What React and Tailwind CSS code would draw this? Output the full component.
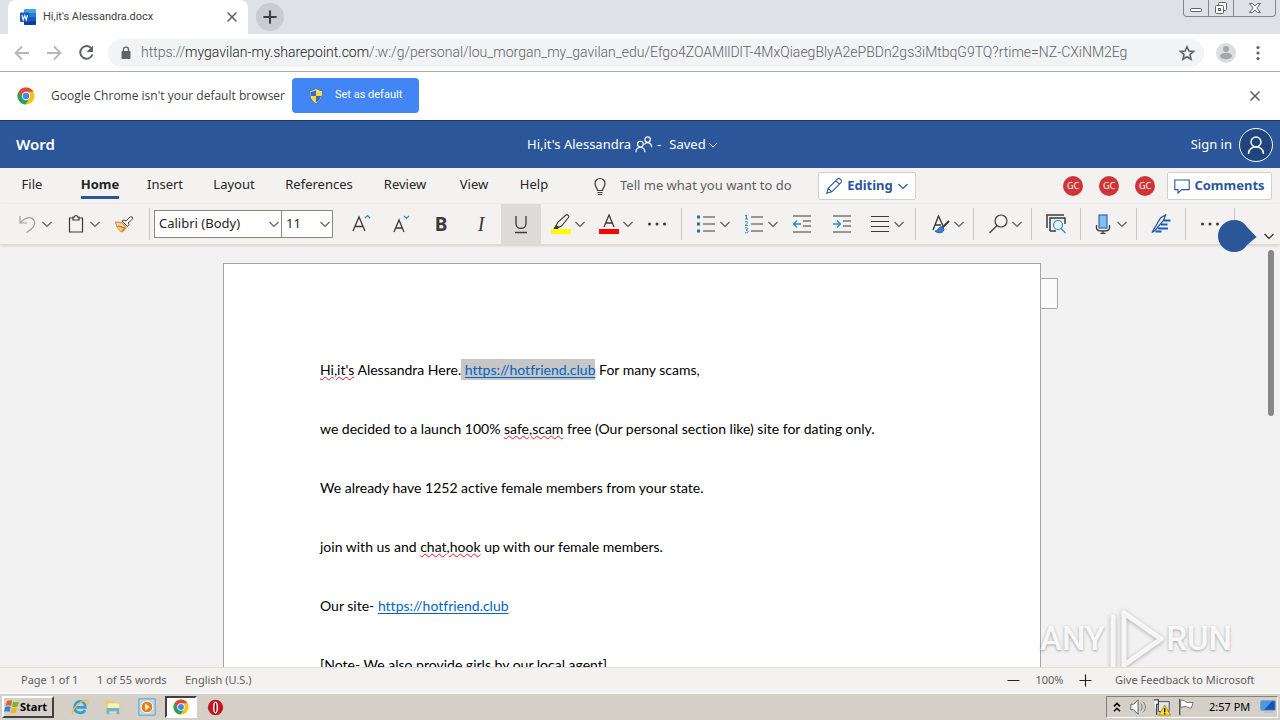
import { Minus, Plus, X } from 'lucide-react';

const TABS = [
    { name: 'File', cell: 'w-16 mr-1' },
    { name: 'Home', cell: 'w-16', active: true },
    { name: 'Insert', cell: 'w-[66px]' },
    { name: 'Layout', cell: 'w-[72px]' },
    { name: 'References', cell: 'w-[98px]' },
    { name: 'Review', cell: 'w-[74px]' },
    { name: 'View', cell: 'w-16' },
    { name: 'Help', cell: 'w-14' },
];

const Svg = ({ size = 20, children, className = '' }) => (
    <svg width={size} height={size} viewBox="0 0 20 20" fill="none" stroke="#3b3a39" strokeWidth="1" className={`shrink-0 ${className}`}>
        {children}
    </svg>
);

const Chevron = ({ size = 12, className = '' }) => (
    <svg width={size} height={size} viewBox="0 0 12 12" fill="none" stroke="currentColor" strokeWidth="1.2" className={`shrink-0 ${className}`}>
        <path d="m1.500 4 4.500 4.500L10.500 4" />
    </svg>
);

const DropButton = ({ label, children, className = '' }) => (
    <button aria-label={label} className={`flex h-10 w-11 items-center pl-1 ${className}`}>
        {children}
        <span className="flex w-[18px] justify-center text-[#605e5c]">
            <Chevron />
        </span>
    </button>
);

const IconButton = ({ label, children, className = 'w-7' }) => (
    <button aria-label={label} className={`flex h-10 items-center justify-center ${className}`}>
        {children}
    </button>
);

const Group = ({ children, className = '' }) => (
    <div className={`relative mr-px flex h-full shrink-0 items-center after:absolute after:top-1 after:-right-px after:h-8 after:w-px after:bg-[#c8c6c4] ${className}`}>
        {children}
    </div>
);

const Dots = () => (
    <Svg>
        <g fill="#3b3a39" stroke="none">
            <circle cx="2.5" cy="10" r="1.5" />
            <circle cx="10" cy="10" r="1.5" />
            <circle cx="17.5" cy="10" r="1.5" />
        </g>
    </Svg>
);

const ChromeLogo = ({ size = 18 }) => (
    <svg width={size} height={size} viewBox="0 0 18 18" className="shrink-0">
        <circle cx="9" cy="9" r="8.5" fill="#fbc116" />
        <path d="M1.6 4.8A8.5 8.5 0 0 0 8.6 17.5L12.4 11 9 9 5.6 11Z" fill="#1da462" />
        <path d="M9 4.8h7.4A8.5 8.5 0 0 0 1.6 4.8L5.4 11 9 9Z" fill="#dd4b3e" />
        <circle cx="9" cy="9" r="4.2" fill="#fff" />
        <circle cx="9" cy="9" r="3.3" fill="#4587f3" />
    </svg>
);

const BrowserTabs = () => (
    <div className="flex h-[34px] shrink-0 items-start bg-[#dee1e6] pl-2">
        <div className="flex h-full w-60 items-center rounded-t-lg bg-white pr-2 pl-3">
            <svg width="16" height="16" viewBox="0 0 16 16" className="shrink-0">
                <rect x="4" y="0" width="12" height="16" rx="1" fill="#41a5ee" />
                <path d="M4 4h12v4H4z" fill="#2b7cd3" />
                <path d="M4 8h12v4H4z" fill="#185abd" />
                <path d="M4 12h12v3a1 1 0 0 1-1 1H5a1 1 0 0 1-1-1z" fill="#103f91" />
                <rect x="0" y="3.500" width="9.500" height="9.500" rx="1" fill="#185abd" />
                <path d="m2 6 1.200 4.800L4.800 6.500l1.500 4.300L7.500 6" fill="none" stroke="#fff" strokeWidth="1.100" />
            </svg>
            <span className="ml-[7px] flex-1 font-['Roboto'] text-[11px] text-[#3c4043]">Hi,it's Alessandra.docx</span>
            <button aria-label="Close tab">
                <X size={16} strokeWidth={2.5} className="text-[#5f6368]" />
            </button>
        </div>
        <button aria-label="New tab" className="mt-[3px] ml-2 flex size-7 items-center justify-center rounded-full bg-[#c9ccd1]">
            <Plus size={20} strokeWidth={2.5} className="text-[#3c4043]" />
        </button>
        <div className="mr-1 ml-auto flex h-[17px] rounded-b border border-t-0 border-[#84868b]">
            <button aria-label="Minimize" className="flex w-[25px] items-center justify-center border-r border-[#84868b]">
                <svg width="12" height="12" fill="#fff" stroke="#5f6368">
                    <rect x=".5" y="6.500" width="11" height="3" rx="1" />
                </svg>
            </button>
            <button aria-label="Restore" className="flex w-[25px] items-center justify-center border-r border-[#84868b]">
                <svg width="14" height="14" fill="#fff" stroke="#5f6368">
                    <rect x="4.500" y="1.500" width="8" height="8" rx="1" />
                    <rect x="1.500" y="4.500" width="8" height="8" rx="1" />
                    <rect x="4.500" y="7.500" width="2" height="2" />
                </svg>
            </button>
            <button aria-label="Close" className="flex w-[41px] items-center justify-center">
                <svg width="12" height="12" fill="#fff" stroke="#5f6368">
                    <path d="M.5 1.500h3L6 4l2.500-2.500h3L7.800 6l3.700 4.500h-3L6 8l-2.500 2.500h-3L4.200 6z" />
                </svg>
            </button>
        </div>
    </div>
);

const AddressBar = () => (
    <div className="flex h-[38px] shrink-0 items-center border-b border-[#a9abae] bg-white pr-3 pl-3">
        <div className="flex w-[84px] items-center gap-3">
            <button aria-label="Back">
                <Svg className="stroke-[#b4b6b9]!"><path d="M17 10H3.500M10 3.500 3.500 10l6.500 6.500" strokeWidth="1.800" /></Svg>
            </button>
            <button aria-label="Forward">
                <Svg className="stroke-[#b4b6b9]!"><path d="M3 10h13.500M10 3.500l6.500 6.500-6.500 6.500" strokeWidth="1.800" /></Svg>
            </button>
            <button aria-label="Reload">
                <Svg><path d="M15.500 5.500a6.300 6.300 0 1 0 1 6" stroke="#5f6368" strokeWidth="2" /><path d="M17 2.500V9h-6.500z" fill="#5f6368" stroke="none" /></Svg>
            </button>
        </div>
        <div className="ml-3 flex h-7 min-w-0 flex-1 items-center rounded-full bg-[#f1f3f4] pr-2 pl-3">
            <svg width="12" height="14" viewBox="0 0 12 14" className="shrink-0">
                <rect x="1.500" y="5" width="9" height="8" rx="1" fill="#5f6368" />
                <path d="M3.500 5.500V3.600a2.500 2.500 0 0 1 5 0v1.900" fill="none" stroke="#5f6368" strokeWidth="1.400" />
            </svg>
            <a href="#doc" className="ml-[9px] flex-1 font-['Roboto'] text-[14px] font-light whitespace-nowrap text-[#5f6368]">
                https://<span className="text-[#202124]">mygavilan-my.sharepoint.com</span>
                /:w:/g/personal/lou_morgan_my_gavilan_edu/Efgo4ZOAMllDlT-4MxQiaegBlyA2ePBDn2gs3iMtbqG9TQ?rtime=NZ-CXiNM2Eg
            </a>
            <button aria-label="Bookmark">
                <Svg size={18}><path d="m10 3 2.100 4.800 5.200.5-4 3.500 1.200 5.100-4.500-2.700-4.500 2.700 1.200-5.100-4-3.500 5.200-.5z" stroke="#5f6368" strokeWidth="1.800" /></Svg>
            </button>
        </div>
        <button aria-label="Profile" className="ml-3">
            <Svg><g stroke="none"><circle cx="10" cy="10" r="10" fill="#dcdddf" /><circle cx="10" cy="6" r="3" fill="#a4a6a8" /><ellipse cx="10" cy="13" rx="6" ry="3.200" fill="#a4a6a8" /></g></Svg>
        </button>
        <button aria-label="Menu" className="ml-3">
            <Svg><g fill="#5f6368" stroke="none"><circle cx="10" cy="4.500" r="1.600" /><circle cx="10" cy="10" r="1.600" /><circle cx="10" cy="15.500" r="1.600" /></g></Svg>
        </button>
    </div>
);

const DefaultBrowserBar = () => (
    <div className="flex h-12 shrink-0 items-center bg-white px-[17px] pb-px">
        <ChromeLogo />
        <span className="ml-4 w-[241px] font-['Open_Sans'] text-[12px] whitespace-nowrap text-[#3c4043]">Google Chrome isn't your default browser</span>
        <button className="flex h-[35px] w-[127px] items-center rounded bg-[#4285f4] pl-4 font-['Roboto'] text-[11px] text-white">
            <svg width="16" height="16" viewBox="0 0 16 16" className="mr-[11px]">
                <path d="M8 .5C6 2 4 2.500 1.500 2.500 1.500 9 3 13 8 15.500 13 13 14.500 9 14.500 2.500 12 2.500 10 2 8 .5z" fill="#e8edf5" stroke="#51709c" />
                <path d="M8 2v6H2.800C2.500 6.500 2.500 5 2.500 3.500 5 3.500 6.500 3 8 2z" fill="#2f6fc4" />
                <path d="M8 2v6h5.200c.3-1.500.3-3 .3-4.500C11 3.500 9.500 3 8 2z" fill="#ffd83a" />
                <path d="M8 8H2.800C3.500 11 5 13 8 14.500z" fill="#ffd83a" />
                <path d="M8 8h5.200C12.500 11 11 13 8 14.500z" fill="#2f6fc4" />
            </svg>
            Set as default
        </button>
        <button aria-label="Dismiss" className="ml-auto">
            <X size={16} strokeWidth={2.5} className="text-[#5f6368]" />
        </button>
    </div>
);

const WordHeader = () => (
    <header className="relative flex h-12 shrink-0 items-center justify-between border-t border-[#203a63] bg-[#2b579a] pr-[7px] pl-4 text-white">
        <span className="text-[15px] font-semibold">Word</span>
        <div className="absolute left-[527px] flex items-center text-[13px]">
            <span>Hi,it's Alessandra</span>
            <Svg size={18} className="ml-1 stroke-white!">
                <g strokeWidth="1.300">
                    <circle cx="6" cy="9" r="3.200" /><path d="M1 18c0-7 10-7 10 0" />
                    <circle cx="14" cy="4" r="3" /><path d="M10.500 9.500c2-3.500 8-2.500 8 3" />
                </g>
            </Svg>
            <span className="mx-1">-</span>
            <span className="ml-1">Saved</span>
            <Chevron size={10} className="ml-0.5" />
        </div>
        <button className="flex items-center gap-[7px] text-[13px]">
            Sign in
            <span className="flex size-[34px] items-center justify-center rounded-full border border-white bg-[#20457c]">
                <Svg className="stroke-white!"><circle cx="10" cy="7" r="5" strokeWidth="1.400" /><path d="M2.500 19c0-9.500 15-9.500 15 0" strokeWidth="1.400" /></Svg>
            </span>
        </button>
    </header>
);

const RibbonTabs = () => (
    <nav className="flex h-9 shrink-0 items-center pr-2">
        {TABS.map((tab) => (
            <button key={tab.name} className={`flex h-full shrink-0 justify-center pt-1.5 text-[13px] text-[#252423] ${tab.cell}`}>
                <span className={`h-[25px] leading-5 ${tab.active ? 'border-b-3 border-[#2b579a] font-bold' : ''}`}>{tab.name}</span>
            </button>
        ))}
        <label className="ml-7 flex items-center">
            <Svg>
                <path d="M7.500 14.500c0-2.500-2.500-3.500-2.500-7a5 5 0 0 1 10 0c0 3.500-2.500 4.500-2.500 7zM7.500 16.500h5M8 18.500h4" strokeWidth="1.200" />
            </Svg>
            <input className="ml-2.5 w-[198px] bg-transparent text-[13px] outline-none placeholder:text-[#605e5c]" placeholder="Tell me what you want to do" />
        </label>
        <button className="flex h-7 w-[98px] shrink-0 items-center justify-center rounded-xs border border-[#d2d0ce] bg-white text-[13px] font-bold text-[#2b579a]">
            <Svg size={18} className="mr-1 stroke-[#2b579a]!">
                <path d="m2 18 1.500-5.500L14 2c2-1.500 5.500 2 4 4L7.500 16.500zM12 4l4 4M3.500 12.500l4 4" strokeWidth="1.200" />
            </Svg>
            Editing
            <Chevron className="ml-1" />
        </button>
        <div className="mr-3 ml-auto flex gap-4">
            {['a', 'b', 'c'].map((id) => (
                <span key={id} className="flex size-5 items-center justify-center rounded-full bg-[#d13438] text-[9px] text-white">GC</span>
            ))}
        </div>
        <button className="flex h-7 w-[105px] shrink-0 items-center justify-center rounded-xs border border-[#d2d0ce] bg-white text-[13px] font-bold text-[#2b579a]">
            <Svg size={16} className="mr-1 stroke-[#2b579a]!"><path d="M1 2.500h18v12H9.500L5 19v-4.500H1z" strokeWidth="1.400" /></Svg>
            Comments
        </button>
    </nav>
);

const FontSelect = ({ label, value, className }) => (
    <div className={`relative ${className}`}>
        <select aria-label={label} className="h-7 w-full appearance-none border border-[#8a8886] bg-white pl-1 text-[13px] text-[#252423]">
            <option>{value}</option>
        </select>
        <Chevron className="pointer-events-none absolute top-2 right-[2px] text-[#605e5c]" />
    </div>
);

const Toolbar = () => (
    <div className="relative z-10 flex h-[41px] shrink-0 items-start border-b border-[#d9d8d7] shadow-sm">
        <Group className="gap-1 pr-[11px] pl-3.5">
            <DropButton label="Undo">
                <Svg><path d="M2 2v7h7M2.300 8.700C7 3 13 2.500 15.500 5.500c3.500 4.500-1.500 10-7 13" stroke="#a19f9d" strokeWidth="1.200" /></Svg>
            </DropButton>
            <DropButton label="Paste">
                <Svg><path d="M7 4H3.500v14h13V4H13M7 6V3h1.500a1.500 1.500 0 0 1 3 0H13v3z" strokeWidth="1.200" /></Svg>
            </DropButton>
            <IconButton label="Format painter">
                <Svg>
                    <path d="m1.500 8 6 .5 5 5-4 4.500C5 17 2.500 13 1.500 8z" fill="#fbd7a8" stroke="#e07b1a" />
                    <path d="m4 12 7 2M8 17l3-3" stroke="#e07b1a" strokeWidth="1.500" />
                    <path d="m8 7 5.500 5.500 1.500-2-1-1.500 4.500-4c1-1.500-1-3-2.500-2l-4 4-2-1z" fill="#fff" />
                </Svg>
            </IconButton>
        </Group>
        <Group className="pr-2.5 pl-1">
            <FontSelect label="Font" value="Calibri (Body)" className="w-32" />
            <FontSelect label="Font size" value="11" className="-ml-px mr-2 w-[52px]" />
            <IconButton label="Grow font" className="w-10">
                <Svg><path d="m2 17 6-14 6 14M4 12.500h8" strokeWidth="1.300" /><path d="m14 4 2.500-2.500L19 4" stroke="#2b88d8" strokeWidth="1.200" /></Svg>
            </IconButton>
            <IconButton label="Shrink font" className="w-10">
                <Svg><path d="m3 18 5-12 5 12M4.800 14h6.400" strokeWidth="1.300" /><path d="m13 2 2.500 2.500L18 2" stroke="#2b88d8" strokeWidth="1.200" /></Svg>
            </IconButton>
            <IconButton label="Bold" className="w-10 text-[19px] font-bold text-[#3b3a39]">B</IconButton>
            <IconButton label="Italic" className="w-10 font-['Liberation_Serif'] text-[20px] text-[#3b3a39] italic">I</IconButton>
            <IconButton label="Underline" className="w-10 bg-[#dddbd9]">
                <Svg><path d="M5 2v7.500c0 6.500 10 6.500 10 0V2M4 18.500h12" strokeWidth="1.300" /></Svg>
            </IconButton>
            <div className="ml-1.5 flex gap-1">
                <DropButton label="Highlight">
                    <Svg>
                        <path d="m5 12 2-4 8-7c1.500-1 3.500 1 2.500 2.500l-7 8.500-4 1.500z" strokeWidth="1.100" />
                        <path d="m3 14.500 2-3 3 2-1 1z" fill="#3b3a39" />
                        <path d="M0 15h20v5H0z" fill="#ff0" stroke="none" />
                    </Svg>
                </DropButton>
                <DropButton label="Font color">
                    <Svg><path d="m5 13 5-12 5 12M6.800 9h6.400" strokeWidth="1.300" /><path d="M0 15h20v5H0z" fill="red" stroke="none" /></Svg>
                </DropButton>
                <IconButton label="More font options"><Dots /></IconButton>
            </div>
        </Group>
        <Group className="gap-1 pr-[5px] pl-2.5">
            <DropButton label="Bullets">
                <Svg><path d="M7 3h12M7 10h12M7 17h12" strokeWidth="1.200" /><path d="M1 1.500h3v3H1zM1 8.500h3v3H1zM1 15.500h3v3H1z" fill="#2b6cb0" stroke="none" /></Svg>
            </DropButton>
            <DropButton label="Numbering">
                <Svg>
                    <path d="M7 3h12M7 10h12M7 17h12" strokeWidth="1.200" />
                    <path d="m1 2 1.500-1v4M1 5h3M1 8c3-1.500 3.500 1 0 3.500h3M1 14c4-1 3 2 1 2.200 3 .2 3 3.500-1 2.500" stroke="#2b88d8" />
                </Svg>
            </DropButton>
            <IconButton label="Decrease indent">
                <Svg><path d="M1 2h18M11 7h8M11 12h8M1 18h18" strokeWidth="1.200" /><path d="M9 10H1.500M5 6.500 1.500 10 5 13.500" stroke="#2b88d8" strokeWidth="1.300" /></Svg>
            </IconButton>
            <IconButton label="Increase indent" className="ml-2 w-7">
                <Svg><path d="M1 2h18M11 7h8M11 12h8M1 18h18" strokeWidth="1.200" /><path d="M1 10h7.500M5 6.500 8.500 10 5 13.500" stroke="#2b88d8" strokeWidth="1.300" /></Svg>
            </IconButton>
            <DropButton label="Alignment" className="ml-1.5">
                <Svg><path d="M1 2.500h18M1 7.500h18M1 12.500h18M1 17.500h18" strokeWidth="1.200" /></Svg>
            </DropButton>
        </Group>
        <Group className="pr-[3px] pl-2.5">
            <DropButton label="Styles">
                <Svg><path d="m3 16 5.500-14L13 12M5 11h6" strokeWidth="1.400" /><path d="m19 7-7 7" strokeWidth="2" /><path d="M12 13c-4-1-3 4-7 4 3 3 9 2 9-2z" fill="#2b88d8" stroke="#2b579a" /></Svg>
            </DropButton>
        </Group>
        <Group className="pr-[3px] pl-2.5">
            <DropButton label="Find">
                <Svg><circle cx="13" cy="7" r="6" strokeWidth="1.200" /><path d="M9 11.500 1.500 19" strokeWidth="1.300" /></Svg>
            </DropButton>
        </Group>
        <Group className="px-2.5">
            <IconButton label="Reuse files">
                <Svg>
                    <path d="M1 14V1h17M4 17V4h15v6M4 17h6" strokeWidth="1.500" />
                    <circle cx="12" cy="11" r="4.500" fill="#e4f1fb" stroke="#2b88d8" strokeWidth="1.200" /><path d="m15 14.500 4.500 4.500" stroke="#2b88d8" strokeWidth="1.300" />
                </Svg>
            </IconButton>
        </Group>
        <Group className="pr-[3px] pl-2">
            <DropButton label="Dictate">
                <Svg><rect x="6" y="1" width="8" height="13" fill="#83beec" stroke="#2b6cb0" strokeWidth="1.200" /><path d="M3.500 11v3c0 3 3 3 6.500 3s6.500 0 6.500-3v-3M10 17v2.500M7.500 19.500h5" strokeWidth="1.300" /></Svg>
            </DropButton>
        </Group>
        <Group className="px-2.5">
            <IconButton label="Editor">
                <Svg><path d="M1 18.500 9.500 4l5-3-2 5.500L4 16.500z" stroke="#2b579a" strokeWidth="1.300" /><path d="M13 6.500h6.500M10 10.500h6.500M7 14.500h10M4.500 17.500h6" stroke="#185abd" strokeWidth="1.800" /></Svg>
            </IconButton>
        </Group>
        <Group className="px-2.5">
            <IconButton label="More options"><Dots /></IconButton>
        </Group>
        <button aria-label="Ribbon display" className="mr-[5px] ml-auto self-end pb-0.5 text-[#252423]"><Chevron /></button>
        <svg width="40" height="32" viewBox="0 0 40 32" className="absolute top-4 right-[22px]">
            <path d="M16 0C22 0 26 2.500 29 7l9.500 10L29 25c-3 4.500-7 7-13 7a16 16 0 0 1 0-32z" fill="#2b579a" />
        </svg>
    </div>
);

const Typo = ({ children }) => (
    <span className="underline decoration-[#e8112d] decoration-wavy decoration-1 underline-offset-1">{children}</span>
);

const SiteLink = () => (
    <a href="#site" className="text-[#0563c1] underline underline-offset-2">https://hotfriend.club</a>
);

const Watermark = () => (
    <div className="pointer-events-none absolute right-12 -bottom-1 z-10 flex h-16 w-48 items-center justify-between font-['Roboto'] text-[33px] font-medium text-white/90 [text-shadow:0_1px_3px_#777a]">
        <span>ANY</span>
        <svg width="60" height="64" viewBox="0 0 60 64" fill="none" className="shrink-0 drop-shadow-[0_1px_2px_#777a]">
            <path d="M7 10v48" stroke="#fff" strokeWidth="5" strokeLinecap="round" opacity=".85" />
            <path d="M18 6v52l37-26z" stroke="#fff" strokeWidth="5" strokeLinejoin="round" opacity=".85" />
        </svg>
        <span>RUN</span>
    </div>
);

const Document = () => (
    <main className="relative min-h-0 flex-1 overflow-hidden bg-[#f2f2f2] pt-[18px] pl-[223px]">
        <div className="flex items-start">
            <article className="h-[640px] w-[818px] border border-[#a6a6a6] bg-white px-24 pt-24 font-['Lato',sans-serif] text-[14px] leading-5 text-black [font-variant-ligatures:none]">
                <p className="mb-[39px]">
                    <Typo>Hi,it's</Typo> Alessandra Here.
                    <span className="bg-[#c6c6c6] py-0.5"> <SiteLink /></span> For many scams,
                </p>
                <p className="mb-[39px]">
                    we decided to a launch 100% <Typo>safe,scam</Typo> free (Our personal section like) site for dating only.
                </p>
                <p className="mb-[39px]">We already have 1252 active female members from your state.</p>
                <p className="mb-[39px]">join with us and <Typo>chat,hook</Typo> up with our female members.</p>
                <p className="mb-[39px]">Our site- <SiteLink /></p>
                <p>[Note- We also provide girls by our local agent]</p>
            </article>
            <button aria-label="Comment" className="mt-[15px] h-[31px] w-[17px] rounded-r-xs border border-l-0 border-[#a6a6a6] bg-[#fafafa]" />
        </div>
        <div className="absolute top-[5px] right-1.5 h-[166px] w-1.5 rounded-full bg-[#888]" />
        <Watermark />
    </main>
);

const StatusBar = () => (
    <footer className="flex h-[26px] shrink-0 items-center border-t border-[#e1dfdd] bg-[#f3f2f1] pr-[21px] pb-px pl-[21px] text-[11px] text-[#605e5c]">
        <span className="w-[76px]">Page 1 of 1</span>
        <span className="w-[88px]">1 of 55 words</span>
        <span>English (U.S.)</span>
        <button aria-label="Zoom out" className="ml-auto text-[#252423]"><Minus size={19} strokeWidth={1.5} /></button>
        <span className="w-[53px] text-center">100%</span>
        <button aria-label="Zoom in" className="text-[#252423]"><Plus size={19} strokeWidth={1.5} /></button>
        <a href="#feedback" className="ml-5 w-36 whitespace-nowrap">Give Feedback to Microsoft</a>
    </footer>
);

const Taskbar = () => (
    <div className="flex h-[27px] shrink-0 items-center border-t border-white bg-[#d4d0c8] px-0.5 text-black">
        <button className="flex h-[22px] w-[52px] items-center border-2 border-t-white border-r-[#404040] border-b-[#404040] border-l-white text-[11px] font-bold">
            <svg width="16" height="16" viewBox="0 0 16 16" className="shrink-0">
                <path d="M3 2c2-1 4-1 5 0L7 7C5.500 6 3.500 6 1.500 7z" fill="#ee5a25" />
                <path d="M9 2.500c2 1 4 1 6 0L13.500 7.500c-2 1-4 1-5.500 0z" fill="#75b82b" />
                <path d="M1.200 8c2-1 4-1 5.500 0l-1.200 5c-2-1-4-1-5.500 0z" fill="#2b8ad8" />
                <path d="M7.700 8.500c2 1 4 1 5.500 0L12 13.500c-2 1-4 1-5.500 0z" fill="#fbb615" />
            </svg>
            Start
        </button>
        <div className="ml-[11px] flex h-full items-center">
            <button aria-label="Internet Explorer" className="flex w-[30px] justify-center">
                <Svg size={18}><path d="M4 10.500h12c0-9-12-9-12 0 0 7 9.500 7.500 11.500 3" stroke="#2ca0dd" strokeWidth="3" /><path d="M2 18C-1 14 12 1 18 3c2 1 0 4-1 5" stroke="#f4bd36" strokeWidth="1.400" /></Svg>
            </button>
            <button aria-label="Explorer" className="flex w-9 justify-center">
                <Svg size={18}><g stroke="none"><path d="M2 3h7l2 2h7v12H2z" fill="#edc962" /><path d="M4 6h13v10H4z" fill="#fff2b8" /><path d="M3 11h14v7h-3v-3H6v3H3z" fill="#67b5de" /></g></Svg>
            </button>
            <button aria-label="Media Player" className="flex w-8 justify-center">
                <Svg size={18}><rect x="1" y="1" width="18" height="18" fill="#b9dcf1" stroke="#4a99c8" /><circle cx="10" cy="10" r="6.500" fill="#f47b12" stroke="#fff" /><path d="m8 6 5 4-5 4z" fill="#fff" stroke="none" /></Svg>
            </button>
            <button aria-label="Chrome" className="ml-0.5 flex h-[22px] w-8 items-center justify-center border-2 border-t-[#404040] border-r-white border-b-white border-l-[#404040] bg-white">
                <ChromeLogo size={16} />
            </button>
            <button aria-label="Opera" className="flex w-9 justify-center">
                <Svg size={17}><g stroke="none"><circle cx="10" cy="10" r="9" fill="#c4161c" /><ellipse cx="10" cy="10" rx="3" ry="7" fill="#fff" /><ellipse cx="10" cy="10" rx="1.200" ry="5.500" fill="#8b0c10" /></g></Svg>
            </button>
        </div>
        <div className="ml-auto flex h-[22px] w-[172px] items-center border border-t-[#808080] border-r-white border-b-white border-l-[#808080] pl-1">
            <Svg size={12} className="stroke-black!"><path d="m5 9 5-5 5 5M5 17l5-5 5 5" strokeWidth="2.500" /></Svg>
            <Svg size={18} className="ml-1.5"><path d="M2 7h3l5-5v16l-5-5H2z" fill="#fff" stroke="#555" /><path d="M13 6c2 2 2 6 0 8M15.500 4c3.500 3.500 3.500 8.500 0 12" stroke="#777" /></Svg>
            <Svg size={18} className="ml-1.5"><path d="M6 4h12v11H6z" fill="#dfe6ec" stroke="#444" /><path d="M1 2h5v5H4v12" fill="#fff" stroke="#444" strokeWidth="1.400" /><path d="m13 8 6.500 11h-13z" fill="#ffdc2e" stroke="#a68400" /><path d="M13 11.500v4M13 16.500v1.500" stroke="#000" strokeWidth="1.400" /></Svg>
            <Svg size={18} className="ml-1.5"><path d="M3 1v18" stroke="#555" strokeWidth="1.600" /><path d="M4 3c4-2 5 2 8 2h6l-2 6c-3 1-5-2-7-1.500l-5 1z" fill="#fff" stroke="#666" /></Svg>
            <span className="ml-3.5 text-[11px] whitespace-nowrap">2:57 PM</span>
            <svg width="16" height="16" viewBox="0 0 16 16" className="mr-px ml-auto"><path d="M1 2h14v9H1z" fill="#1557ae" stroke="#4279bd" /><path d="M1 2h11L4 11H1z" fill="#4999e5" /><path d="M5 12h8l1 2H4z" fill="#bcc5ce" /></svg>
        </div>
    </div>
);

const App = () => (
    <div className="flex h-screen flex-col overflow-hidden font-['Noto_Sans',sans-serif]">
        <BrowserTabs />
        <AddressBar />
        <DefaultBrowserBar />
        <WordHeader />
        <div className="shrink-0 bg-[#f3f2f1]">
            <RibbonTabs />
            <Toolbar />
        </div>
        <Document />
        <StatusBar />
        <Taskbar />
    </div>
);

export default App;
